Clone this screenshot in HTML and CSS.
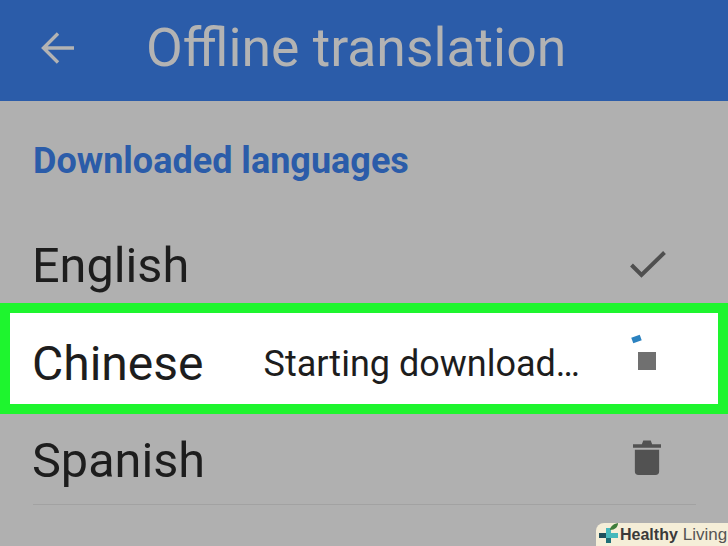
FILE: index.html
```html
<!DOCTYPE html>
<html lang="en">
<head>
<meta charset="UTF-8" />
<title>Offline translation</title>
<link rel="stylesheet" href="styles.css">
</head>
<body>
<header class="app-bar">
  <svg class="back-icon" viewBox="0 0 36 36" aria-label="Back">
    <path d="M34 18H4M18 3.500 3.500 18 18 32.500" fill="none" stroke="#b3b3b3" stroke-width="3.400" />
  </svg>
  <div class="app-title">Offline translation</div>
</header>
<main>
  <div class="section-title">Downloaded languages</div>
  <div class="lang-row row-english">
    <span class="lang-name">English</span>
    <svg class="check-icon" viewBox="0 0 36 28" aria-label="Downloaded">
      <path d="M1.500 14 11.500 24 34.500 1.500" fill="none" stroke="#4f4f4f" stroke-width="4" />
    </svg>
  </div>
  <div class="lang-row row-active">
    <span class="lang-name">Chinese</span>
    <span class="status">Starting download…</span>
    <div class="progress">
      <span class="spinner"></span>
      <span class="stop"></span>
    </div>
  </div>
  <div class="lang-row row-spanish">
    <span class="lang-name">Spanish</span>
    <svg class="trash-icon" viewBox="0 0 30 38" preserveAspectRatio="none" aria-label="Delete">
      <path d="M0 5.500H9.500L11 1.500H19L20.500 5.500H30V9H0Z M2 11H28V33.500Q28 37 24 37H6Q2 37 2 33.500Z" fill="#525252" />
    </svg>
  </div>
</main>
<div class="badge">
  <svg class="badge-logo" viewBox="0 0 22 23">
    <path d="M1 10h8v5H1z" fill="#1f4f5c" />
    <path d="M8 15h5v5H8z" fill="#1f6f78" />
    <path d="M8 5h5v5h7v5H8z" fill="#45b8bc" />
    <path d="M12 7C12 4 15 1 20 0 20 4 17 7 12 7z" fill="#3f7d3a" />
  </svg>
  <span class="badge-strong">Healthy</span><span class="badge-light">Living</span>
</div>
</body>
</html>
```

FILE: styles.css
```css
* {
  box-sizing: border-box;
}
body {
  margin: 0;
  height: 546px;
  overflow: hidden;
  position: relative;
  background: #b0b0b0;
  font-family: Roboto, "Liberation Sans", sans-serif;
  color: #1d1d1d;
}
.app-bar {
  height: 101px;
  background: #2b5ca9;
  display: flex;
  align-items: center;
  padding: 0 0 6px 40px;
}
.back-icon {
  width: 36px;
  height: 36px;
  margin-right: 70px;
}
.app-title {
  font-size: 53.500px;
  color: #b3b3b3;
}
main {
  display: flex;
  flex-direction: column;
}
.section-title {
  padding: 40px 33px 0;
  height: 114px;
  font-size: 36px;
  font-weight: 700;
  line-height: 41px;
  color: #2b5ca9;
}
.lang-row {
  display: flex;
  align-items: center;
  padding: 0 33px;
}
.lang-name {
  font-size: 48.600px;
  margin-left: -1px;
}
.row-english {
  height: 88px;
  justify-content: space-between;
  padding-top: 12px;
  padding-right: 62px;
}
.check-icon {
  width: 36px;
  height: 28px;
}
.row-active {
  height: 111px;
  background: #fff;
  border: 10px solid #1ef52e;
  padding: 10px 0 0 23px;
}
.row-active .lang-name {
  font-size: 48px;
}
.status {
  font-size: 36px;
  margin-left: 60px;
  flex: 1;
}
.progress {
  width: 86px;
  display: flex;
  flex-direction: column;
  margin-top: -22px;
}
.spinner {
  width: 9px;
  height: 6px;
  background: #2b82c0;
  transform: rotate(-20deg);
  margin-bottom: 10px;
}
.stop {
  width: 18px;
  height: 18px;
  background: #707070;
  margin-left: 6px;
}
.row-spanish {
  height: 91px;
  justify-content: space-between;
  padding: 2px 35px 0 0;
  border-bottom: 1px solid #a2a2a2;
  margin: 0 32px 0 33px;
}
.trash-icon {
  width: 28px;
  height: 37px;
  margin-top: -6px;
}
.badge {
  position: absolute;
  right: 0;
  bottom: 0;
  width: 132px;
  height: 23px;
  background: #f5eed8;
  border-radius: 8px 0 0 0;
  display: flex;
  align-items: center;
  padding-left: 2px;
  color: #3a3a3a;
  font-family: "Liberation Sans", sans-serif;
}
.badge-logo {
  width: 22px;
  height: 23px;
}
.badge-strong {
  font-size: 16px;
  font-weight: 700;
  margin-right: 5px;
}
.badge-light {
  font-size: 17px;
  color: #555;
}
```
